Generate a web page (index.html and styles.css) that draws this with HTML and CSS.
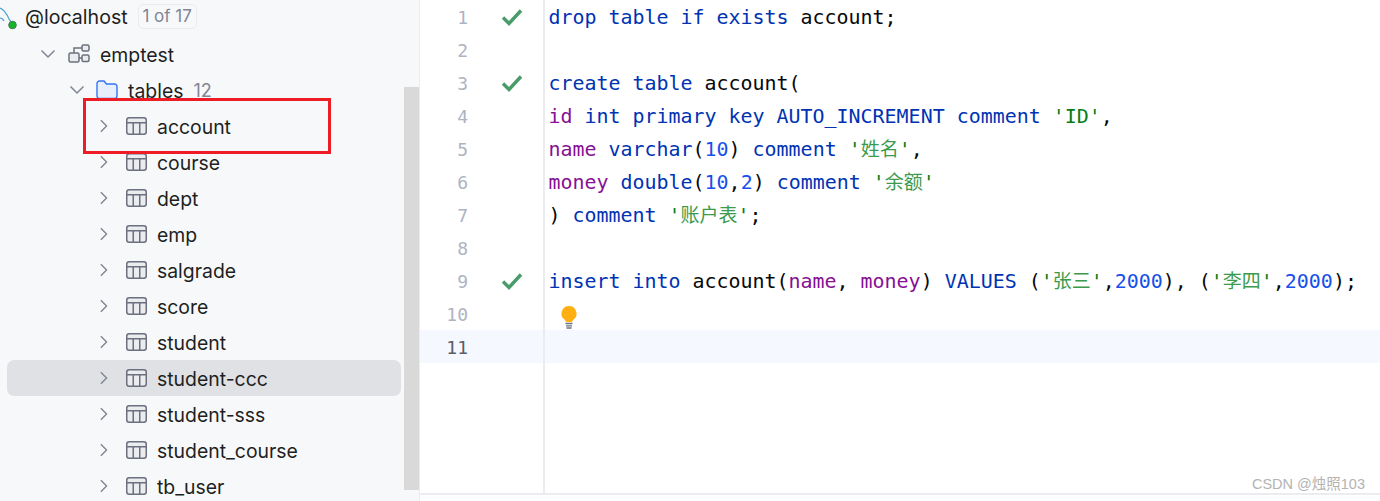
FILE: index.html
```html
<!DOCTYPE html>
<html lang="en">
<head>
<meta charset="utf-8">
<title>Database console</title>
<link rel="stylesheet" href="styles.css">
</head>
<body>
<svg class="defs" width="0" height="0" aria-hidden="true">
  <defs>
    <symbol id="chev-r" viewBox="0 0 10 16"><path d="M2 1.500 8.500 8 2 14.500" fill="none" stroke="#7f8494" stroke-width="1.600"/></symbol>
    <symbol id="chev-d" viewBox="0 0 16 10"><path d="M1.500 1.500 8 8l6.500-6.500" fill="none" stroke="#7f8494" stroke-width="1.500"/></symbol>
    <symbol id="tbl" viewBox="0 0 21 18"><rect x=".75" y=".75" width="19.500" height="16.500" rx="2.500" fill="#ebecf0" stroke="#6c707e" stroke-width="1.500"/><path d="M1 5.750h19M7.250 5.750V17M13.750 5.750V17" fill="none" stroke="#6c707e" stroke-width="1.500"/></symbol>
    <symbol id="chk" viewBox="0 0 22 18"><path d="M2 9.500 8 15.500 20 2.500" fill="none" stroke="#499c6a" stroke-width="3.400"/></symbol>
  </defs>
</svg>
<main class="app">
  <aside class="sidebar">
    <div class="row row-host">
      <svg class="ico-host" width="22" height="30" viewBox="0 0 22 30"><path d="M0 7C5 9 7 13 9 18c1 2 2 3 4 3" fill="none" stroke="#4aa3d8" stroke-width="1.200"/><path d="M0 17c2 0 3 1 4 3" fill="none" stroke="#4aa3d8" stroke-width="1.200"/><circle cx="12.500" cy="24" r="3.800" fill="#18b32c" stroke="#4a7a50" stroke-width="1"/></svg>
      <span class="name name-host">@localhost</span>
      <span class="badge">1 of 17</span>
    </div>
    <div class="row row-schema">
      <svg class="chev-down" width="16" height="10"><use href="#chev-d"/></svg>
      <svg class="ico-schema" width="22" height="20" viewBox="0 0 22 20"><rect x="1" y="9" width="10" height="9" rx="1.500" fill="#ebecf0" stroke="#6c707e" stroke-width="1.500"/><rect x="14" y="1" width="7" height="6" rx="1.500" fill="#ebecf0" stroke="#6c707e" stroke-width="1.500"/><rect x="14" y="11" width="7" height="6.500" rx="1.500" fill="#ebecf0" stroke="#6c707e" stroke-width="1.500"/><path d="M6 9V4h8M11 14h3" fill="none" stroke="#6c707e" stroke-width="1.500"/></svg>
      <span class="name">emptest</span>
    </div>
    <div class="row row-folder">
      <svg class="chev-down" width="16" height="10"><use href="#chev-d"/></svg>
      <svg class="ico-folder" width="22" height="20" viewBox="0 0 22 20"><path d="M1 3.500A2.500 2.500 0 0 1 3.500 1H8l2.500 3H18.500A2.500 2.500 0 0 1 21 6.500V16a2.500 2.500 0 0 1-2.500 2.500h-15A2.500 2.500 0 0 1 1 16Z" fill="#e7effd" stroke="#3574f0" stroke-width="1.400"/></svg>
      <span class="name">tables</span>
      <span class="count">12</span>
    </div>
    <div class="row row-table"><svg class="chev-right" width="9" height="14"><use href="#chev-r"/></svg><svg class="ico-table" width="21" height="18"><use href="#tbl"/></svg><span class="name">account</span></div>
    <div class="row row-table"><svg class="chev-right" width="9" height="14"><use href="#chev-r"/></svg><svg class="ico-table" width="21" height="18"><use href="#tbl"/></svg><span class="name">course</span></div>
    <div class="row row-table"><svg class="chev-right" width="9" height="14"><use href="#chev-r"/></svg><svg class="ico-table" width="21" height="18"><use href="#tbl"/></svg><span class="name">dept</span></div>
    <div class="row row-table"><svg class="chev-right" width="9" height="14"><use href="#chev-r"/></svg><svg class="ico-table" width="21" height="18"><use href="#tbl"/></svg><span class="name">emp</span></div>
    <div class="row row-table"><svg class="chev-right" width="9" height="14"><use href="#chev-r"/></svg><svg class="ico-table" width="21" height="18"><use href="#tbl"/></svg><span class="name">salgrade</span></div>
    <div class="row row-table"><svg class="chev-right" width="9" height="14"><use href="#chev-r"/></svg><svg class="ico-table" width="21" height="18"><use href="#tbl"/></svg><span class="name">score</span></div>
    <div class="row row-table"><svg class="chev-right" width="9" height="14"><use href="#chev-r"/></svg><svg class="ico-table" width="21" height="18"><use href="#tbl"/></svg><span class="name">student</span></div>
    <div class="row row-table is-selected"><svg class="chev-right" width="9" height="14"><use href="#chev-r"/></svg><svg class="ico-table" width="21" height="18"><use href="#tbl"/></svg><span class="name">student-ccc</span></div>
    <div class="row row-table"><svg class="chev-right" width="9" height="14"><use href="#chev-r"/></svg><svg class="ico-table" width="21" height="18"><use href="#tbl"/></svg><span class="name">student-sss</span></div>
    <div class="row row-table"><svg class="chev-right" width="9" height="14"><use href="#chev-r"/></svg><svg class="ico-table" width="21" height="18"><use href="#tbl"/></svg><span class="name">student_course</span></div>
    <div class="row row-table"><svg class="chev-right" width="9" height="14"><use href="#chev-r"/></svg><svg class="ico-table" width="21" height="18"><use href="#tbl"/></svg><span class="name">tb_user</span></div>
    <div class="scrollbar"></div>
    <div class="callout"></div>
  </aside>
  <section class="editor">
    <div class="line"><span class="num">1</span><span class="mark"><svg width="22" height="18"><use href="#chk"/></svg></span><code class="code"><b class="k">drop table if exists</b> account;</code></div>
    <div class="line"><span class="num">2</span><span class="mark"></span><code class="code"></code></div>
    <div class="line"><span class="num">3</span><span class="mark"><svg width="22" height="18"><use href="#chk"/></svg></span><code class="code"><b class="k">create table</b> account(</code></div>
    <div class="line"><span class="num">4</span><span class="mark"></span><code class="code"><b class="c">id</b> <b class="k">int primary key AUTO_INCREMENT comment</b> <b class="s">'ID'</b>,</code></div>
    <div class="line"><span class="num">5</span><span class="mark"></span><code class="code"><b class="c">name</b> <b class="k">varchar</b>(<b class="n">10</b>) <b class="k">comment</b> <b class="s">'<i class="z">姓名</i>'</b>,</code></div>
    <div class="line"><span class="num">6</span><span class="mark"></span><code class="code"><b class="c">money</b> <b class="k">double</b>(<b class="n">10</b>,<b class="n">2</b>) <b class="k">comment</b> <b class="s">'<i class="z">余额</i>'</b></code></div>
    <div class="line"><span class="num">7</span><span class="mark"></span><code class="code">) <b class="k">comment</b> <b class="s">'<i class="z">账户表</i>'</b>;</code></div>
    <div class="line"><span class="num">8</span><span class="mark"></span><code class="code"></code></div>
    <div class="line"><span class="num">9</span><span class="mark"><svg width="22" height="18"><use href="#chk"/></svg></span><code class="code"><b class="k">insert into</b> account(<b class="c">name</b>, <b class="c">money</b>) <b class="k">VALUES</b> (<b class="s">'<i class="z">张三</i>'</b>,<b class="n">2000</b>), (<b class="s">'<i class="z">李四</i>'</b>,<b class="n">2000</b>);</code></div>
    <div class="line"><span class="num">10</span><span class="mark"></span><code class="code code-bulb"><svg class="bulb" width="18" height="24" viewBox="0 0 18 24"><path d="M9 1a7.500 7.500 0 0 0-4.500 13.500c.8.7 1.300 1.500 1.500 2.500h6c.2-1 .7-1.800 1.500-2.500A7.500 7.500 0 0 0 9 1Z" fill="#ffaf0f"/><path d="M5.500 18.500h7M6 20.800h6M6.500 23h5" fill="none" stroke="#6c707e" stroke-width="1.300"/></svg></code></div>
    <div class="line is-current"><span class="num">11</span><span class="mark"></span><code class="code"></code></div>
    <div class="line line-fill"><span class="num"></span><span class="mark"></span><code class="code"></code></div>
    <div class="watermark">CSDN @烛照103</div>
  </section>
</main>
</body>
</html>
```
FILE: styles.css
```css
* { box-sizing: border-box; }
html, body { margin: 0; height: 100%; overflow: hidden; background: #fff; }
.defs { position: absolute; }
.app { display: grid; grid-template-columns: 420px 1fr; height: 501px; }

.sidebar {
  position: relative;
  background: #f7f8fa;
  border-right: 1px solid #ebecf0;
  font: 19.4px/36px Inter, "Liberation Sans", sans-serif;
  color: #1e1f22;
  overflow: hidden;
}
.row { display: flex; align-items: center; height: 36px; flex: none; }
.name { padding-top: 2px; }
.name-host { font-size: 19.6px; }
.row-host { height: 32px; margin-bottom: 4px; }
.row-schema { padding-left: 40px; }
.row-folder { padding-left: 69px; }
.row-table { margin: 0 18px 0 7px; padding-left: 92px; border-radius: 7px; }
.is-selected { background: #dfe1e5; }
.ico-host { margin-right: 3px; flex: none; }
.chev-down { flex: none; }
.ico-schema { margin: 0 10px 0 12px; flex: none; }
.ico-folder { margin: 0 10px 0 11px; flex: none; }
.chev-right { flex: none; margin-right: 17.5px; }
.ico-table { flex: none; margin-right: 10.5px; }
.badge {
  margin-left: 10px;
  width: 59px;
  height: 25px;
  border: 1px solid #ebecf0;
  border-radius: 5px;
  color: #818594;
  font-size: 17px;
  line-height: 25px;
  display: flex;
  align-items: center;
  justify-content: center;
}
.count { margin-left: 10px; padding-top: 2px; color: #818594; font-size: 18px; }
.scrollbar {
  position: absolute;
  top: 87px; left: 404px;
  width: 15px; height: 403px;
  background: #d9d9d9;
}
.callout {
  position: absolute;
  top: 98px; left: 83px;
  width: 248px; height: 56px;
  border: 3px solid #ee1c25;
}

.editor {
  position: relative;
  display: flex;
  flex-direction: column;
  height: 495px;
  border-bottom: 2px solid #ebecf0;
  font: 19.94px/33px "DejaVu Sans Mono", "Liberation Mono", "Noto Sans CJK SC", monospace;
  color: #080808;
}
.line { display: grid; grid-template-columns: 48px 77px 1fr; height: 33px; flex: none; }
.line-fill { flex: 1; }
.is-current { background: #f5f8fe; }
.num { text-align: right; color: #aeb3c2; font-size: 18px; padding-top: 1px; }
.is-current .num { color: #5a5d6b; }
.mark {
  border-right: 2px solid #ebecf0;
  display: flex;
  align-items: center;
  padding-left: 33px;
}
.code { font: inherit; padding: 1px 0 0 3.5px; white-space: pre; }
.code b { font-weight: 400; }
.code-bulb { padding: 8px 0 0 15px; display: flex; align-items: flex-start; }
.bulb { overflow: visible; }
.k { color: #0033b3; }
.c { color: #871094; }
.s { color: #067d17; }
.n { color: #1750eb; }
.z { font-style: normal; font-size: 19px; color: #3c9a4c; }
.watermark {
  position: absolute;
  right: 15px; bottom: -1px;
  font: 14.5px/20px "Liberation Sans", "Noto Sans CJK SC", sans-serif;
  color: #b3b3b3;
}
```
